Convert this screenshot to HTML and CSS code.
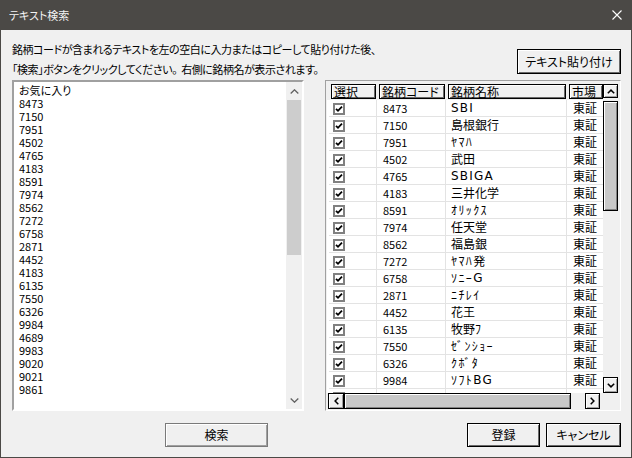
FILE: index.html
```html
<!DOCTYPE html>
<html lang="ja">
<head>
<meta charset="utf-8">
<title>テキスト検索</title>
<link rel="stylesheet" href="styles.css">
</head>
<body>
<div class="window">
  <div class="titlebar">
    <span class="title">テキスト検索</span>
    <svg class="close" width="10" height="10" viewBox="0 0 10 10"><path d="M0.5 0.5 L9.5 9.5 M9.5 0.5 L0.5 9.5" stroke="#fff" stroke-width="1.1" fill="none"/></svg>
  </div>
  <div class="content">
    <div class="top">
      <div class="instr">
        <div class="line">銘柄コードが含まれるテキストを左の空白に入力またはコピーして貼り付けた後、</div>
        <div class="line">「検索」ボタンをクリックしてください<span class="np">。</span>右側に銘柄名が表示されます。</div>
      </div>
      <button class="btn btn-def paste">テキスト貼り付け</button>
    </div>
    <div class="main">
      <div class="edit">
        <div class="edit-text">
          <div>お気に入り</div>
          <div>8473</div><div>7150</div><div>7951</div><div>4502</div><div>4765</div><div>4183</div>
          <div>8591</div><div>7974</div><div>8562</div><div>7272</div><div>6758</div><div>2871</div>
          <div>4452</div><div>4183</div><div>6135</div><div>7550</div><div>6326</div><div>9984</div>
          <div>4689</div><div>9983</div><div>9020</div><div>9021</div><div>9861</div>
        </div>
        <div class="wscroll">
          <div class="warrow"><svg width="9" height="5" viewBox="0 0 9 5"><path d="M0.7 4.5 L4.5 0.8 L8.3 4.5" stroke="#606060" stroke-width="1.3" fill="none"/></svg></div>
          <div class="wthumb"></div>
          <div class="wtrack"></div>
          <div class="warrow"><svg width="9" height="5" viewBox="0 0 9 5"><path d="M0.7 0.5 L4.5 4.2 L8.3 0.5" stroke="#606060" stroke-width="1.3" fill="none"/></svg></div>
        </div>
      </div>
      <div class="grid">
        <div class="viewport">
          <div class="hdr">
            <div class="hcol c1"><div class="hcell">選択</div></div>
            <div class="hcol c2"><div class="hcell">銘柄コード</div></div>
            <div class="hcol c3"><div class="hcell">銘柄名称</div></div>
            <div class="hcol c4"><div class="hcell">市場</div></div>
          </div>
          <div class="row"><div class="cell c1"><span class="chk"></span></div><div class="cell c2">8473</div><div class="cell c3"><span class="lat">SBI</span></div><div class="cell c4">東証</div></div>
          <div class="row"><div class="cell c1"><span class="chk"></span></div><div class="cell c2">7150</div><div class="cell c3">島根銀行</div><div class="cell c4">東証</div></div>
          <div class="row"><div class="cell c1"><span class="chk"></span></div><div class="cell c2">7951</div><div class="cell c3"><span class="hw">ﾔﾏﾊ</span></div><div class="cell c4">東証</div></div>
          <div class="row"><div class="cell c1"><span class="chk"></span></div><div class="cell c2">4502</div><div class="cell c3">武田</div><div class="cell c4">東証</div></div>
          <div class="row"><div class="cell c1"><span class="chk"></span></div><div class="cell c2">4765</div><div class="cell c3"><span class="lat">SBIGA</span></div><div class="cell c4">東証</div></div>
          <div class="row"><div class="cell c1"><span class="chk"></span></div><div class="cell c2">4183</div><div class="cell c3">三井化学</div><div class="cell c4">東証</div></div>
          <div class="row"><div class="cell c1"><span class="chk"></span></div><div class="cell c2">8591</div><div class="cell c3"><span class="hw">ｵﾘｯｸｽ</span></div><div class="cell c4">東証</div></div>
          <div class="row"><div class="cell c1"><span class="chk"></span></div><div class="cell c2">7974</div><div class="cell c3">任天堂</div><div class="cell c4">東証</div></div>
          <div class="row"><div class="cell c1"><span class="chk"></span></div><div class="cell c2">8562</div><div class="cell c3">福島銀</div><div class="cell c4">東証</div></div>
          <div class="row"><div class="cell c1"><span class="chk"></span></div><div class="cell c2">7272</div><div class="cell c3"><span class="hw">ﾔﾏﾊ</span>発</div><div class="cell c4">東証</div></div>
          <div class="row"><div class="cell c1"><span class="chk"></span></div><div class="cell c2">6758</div><div class="cell c3"><span class="hw">ｿﾆｰ</span><span class="lat">G</span></div><div class="cell c4">東証</div></div>
          <div class="row"><div class="cell c1"><span class="chk"></span></div><div class="cell c2">2871</div><div class="cell c3"><span class="hw">ﾆﾁﾚｲ</span></div><div class="cell c4">東証</div></div>
          <div class="row"><div class="cell c1"><span class="chk"></span></div><div class="cell c2">4452</div><div class="cell c3">花王</div><div class="cell c4">東証</div></div>
          <div class="row"><div class="cell c1"><span class="chk"></span></div><div class="cell c2">6135</div><div class="cell c3">牧野<span class="hw">ﾌ</span></div><div class="cell c4">東証</div></div>
          <div class="row"><div class="cell c1"><span class="chk"></span></div><div class="cell c2">7550</div><div class="cell c3"><span class="hw">ｾﾞﾝｼｮｰ</span></div><div class="cell c4">東証</div></div>
          <div class="row"><div class="cell c1"><span class="chk"></span></div><div class="cell c2">6326</div><div class="cell c3"><span class="hw">ｸﾎﾞﾀ</span></div><div class="cell c4">東証</div></div>
          <div class="row"><div class="cell c1"><span class="chk"></span></div><div class="cell c2">9984</div><div class="cell c3"><span class="hw">ｿﾌﾄ</span><span class="lat">BG</span></div><div class="cell c4">東証</div></div>
          <div class="row"><div class="cell c1"><span class="chk"></span></div><div class="cell c2"></div><div class="cell c3"></div><div class="cell c4"></div></div>
        </div>
        <div class="vs">
          <div class="cbtn vup"><svg width="8" height="5" viewBox="0 0 8 5"><path d="M0.8 4.3 L4 1.1 L7.2 4.3" stroke="#000" stroke-width="1.5" fill="none"/></svg></div>
          <div class="cthumb vthumb"></div>
          <div class="fill"></div>
          <div class="cbtn vdown"><svg width="8" height="5" viewBox="0 0 8 5"><path d="M0.8 0.7 L4 3.9 L7.2 0.7" stroke="#000" stroke-width="1.5" fill="none"/></svg></div>
        </div>
        <div class="hs">
          <div class="cbtn hleft"><svg width="5" height="8" viewBox="0 0 5 8"><path d="M4.3 0.8 L1.1 4 L4.3 7.2" stroke="#000" stroke-width="1.5" fill="none"/></svg></div>
          <div class="cthumb hthumb"></div>
          <div class="fill"></div>
          <div class="cbtn hright"><svg width="5" height="8" viewBox="0 0 5 8"><path d="M0.7 0.8 L3.9 4 L0.7 7.2" stroke="#000" stroke-width="1.5" fill="none"/></svg></div>
        </div>
        <div class="corner"></div>
      </div>
    </div>
    <div class="bottom">
      <button class="btn btn-std search">検索</button>
      <button class="btn btn-def ok">登録</button>
      <button class="btn btn-def cancel">キャンセル</button>
    </div>
  </div>
</div>
</body>
</html>
```

FILE: styles.css
```css
* { box-sizing: border-box; }
html, body { margin: 0; padding: 0; }
body {
  font-family: "Noto Sans CJK JP", "Noto Sans", sans-serif;
  font-size: 12px;
  font-feature-settings: "palt";
  color: #000;
  background: #f0f0f0;
}
.window {
  width: 632px;
  height: 458px;
  background: #f0f0f0;
  border: 1px solid #4b4946;
  border-top: none;
  display: flex;
  flex-direction: column;
}
.titlebar {
  height: 30px;
  background: #4b4946;
  margin: 0 -1px;
  display: flex;
  align-items: center;
  justify-content: space-between;
  padding: 0 10px 0 9px;
  flex-shrink: 0;
}
.title { color: #f4f4f4; font-size: 11px; line-height: 16px; }
.close { display: block; }

.content {
  flex: 1;
  display: flex;
  flex-direction: column;
  padding: 9px 10px 0 11px;
}
.top {
  height: 41px;
  display: flex;
  justify-content: space-between;
  align-items: flex-start;
}
.instr .line {
  font-size: 11px;
  letter-spacing: -0.45px;
  line-height: 20px;
  height: 20px;
  white-space: nowrap;
}
.instr .np { font-feature-settings: normal; letter-spacing: -2px; }

.btn {
  font-family: inherit;
  font-size: 12px;
  font-feature-settings: "palt";
  color: #000;
  background: #f0f0f0;
  padding: 0;
  margin: 0;
  line-height: 16px;
  height: 24px;
}
.btn-def {
  border: 1px solid #000;
  box-shadow: inset 1px 1px #fff, inset -1px -1px #696969;
}
.btn-std {
  border: 1px solid #7a7a7a;
  box-shadow: inset 1px 1px #fff, inset -1px -1px #a0a0a0;
}
.paste { width: 104px; height: 25px; margin-top: 10px; }

.main {
  height: 331px;
  display: flex;
  justify-content: space-between;
}
.edit {
  width: 292px;
  height: 331px;
  border: 2px solid;
  border-color: #a0a0a0 #fff #fff #a0a0a0;
  background: #fff;
  display: flex;
}
.edit-text {
  flex: 1;
  padding: 2px 0 0 5px;
  font-size: 11px;
  line-height: 13px;
}
.wscroll {
  width: 16px;
  background: #f0f0f0;
  display: flex;
  flex-direction: column;
}
.warrow {
  height: 18px;
  display: flex;
  align-items: center;
  justify-content: center;
}
.warrow svg { display: block; }
.wthumb { height: 155px; background: #cdcdcd; margin: 0 1px; }
.wtrack { flex: 1; }

.grid {
  width: 296px;
  height: 331px;
  border: 1px solid;
  border-color: #a0a0a0 #fff #fff #a0a0a0;
  padding: 1px;
  background: #f0f0f0;
  display: grid;
  grid-template-columns: 1fr 16px;
  grid-template-rows: 1fr 16px;
}
.viewport {
  overflow: hidden;
  background: #fff;
  padding-left: 2px;
}
.hdr { display: flex; height: 18px; background: #f0f0f0; margin-left: -2px; padding-left: 2px; }
.c1 { width: 48px; }
.c2 { width: 69px; }
.c3 { width: 121px; }
.c4 { width: 36px; }
.hcol { flex-shrink: 0; padding: 2px 1px 1px 2px; }
.hcell {
  height: 15px;
  border: 1px solid #000;
  box-shadow: inset 1px 1px #fff, inset -1px -1px #696969;
  background: #f0f0f0;
  font-size: 12px;
  line-height: 13px;
  padding-left: 2px;
  white-space: nowrap;
  overflow: hidden;
}
.c4 .hcell { margin-right: -1px; }
.row {
  display: flex;
  height: 17px;
}
.cell {
  flex-shrink: 0;
  height: 17px;
  border-right: 1px solid #e3e3e3;
  border-bottom: 1px solid #e3e3e3;
  line-height: 16px;
  white-space: nowrap;
  overflow: hidden;
  display: flex;
  align-items: center;
}
.cell.c1 { padding-left: 4px; }
.cell.c2 { padding-left: 6px; font-size: 11px; }
.cell.c3 { padding-left: 5px; font-feature-settings: normal; }
.cell.c3 .hw { font-size: 12px; letter-spacing: 1.4px; }
.cell.c3 .lat { font-family: "DejaVu Sans", sans-serif; font-size: 12px; letter-spacing: 1.2px; }
.cell.c4 { padding-left: 6px; border-right: none; }
.chk {
  width: 12px;
  height: 12px;
  border: 2px solid #808080;
  background: #fff url("data:image/svg+xml,%3Csvg xmlns='http://www.w3.org/2000/svg' width='8' height='8' viewBox='0 0 8 8'%3E%3Cpath d='M1 3.8 L3 5.8 L7 1.6' stroke='%23000' stroke-width='1.8' fill='none'/%3E%3C/svg%3E") center/8px 8px no-repeat;
  margin-top: 1px;
}

.vs { display: flex; flex-direction: column; background: #f0f0f0; }
.hs { display: flex; background: #f0f0f0; }
.fill { flex: 1; }
.corner { background: #f0f0f0; }
.cbtn {
  border: 1px solid #000;
  box-shadow: inset 1px 1px #fff, inset -1px -1px #a0a0a0;
  background: #f0f0f0;
  display: flex;
  align-items: center;
  justify-content: center;
  flex-shrink: 0;
}
.cbtn svg { display: block; }
.cthumb {
  border: 1px solid #000;
  box-shadow: inset 1px 1px #fff, inset -1px -1px #808080;
  background: #c8c8c8;
  flex-shrink: 0;
}
.vup { width: 15px; height: 14px; margin-top: 2px; }
.vthumb { width: 15px; height: 110px; margin-top: 3px; }
.vdown { width: 15px; height: 16px; }
.hleft { width: 16px; height: 16px; margin-left: 1px; }
.hthumb { width: 227px; height: 16px; }
.hright { width: 15px; height: 16px; margin-right: 3px; }

.bottom {
  flex: 1;
  display: flex;
  align-items: flex-start;
  padding-top: 12px;
}
.search { width: 103px; margin-left: 153px; }
.ok { width: 73px; margin-left: auto; }
.cancel { width: 75px; margin-left: 6px; }
```
